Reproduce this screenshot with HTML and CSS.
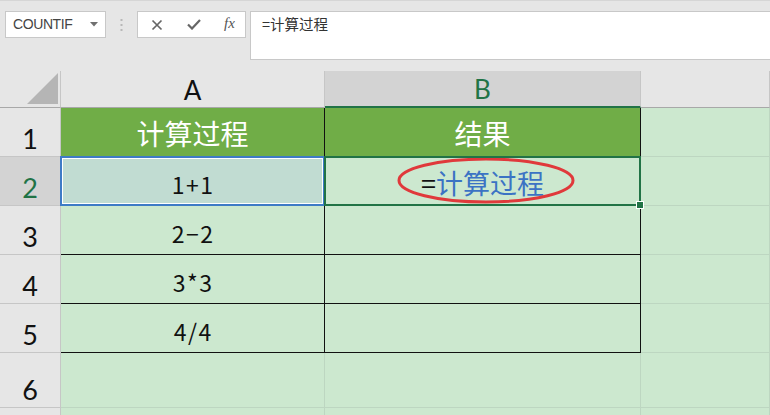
FILE: index.html
```html
<!DOCTYPE html>
<html lang="zh-CN">
<head>
<meta charset="utf-8">
<title>COUNTIF</title>
<link rel="stylesheet" href="styles.css">
</head>
<body>
<div class="app">
  <div class="toolbar">
    <div class="namebox">
      <span class="name">COUNTIF</span>
      <svg class="caret" width="8" height="5" viewBox="0 0 8 5"><polygon points="0,0 8,0 4,4.5" fill="#707070"/></svg>
    </div>
    <div class="grip">
      <svg width="3" height="12" viewBox="0 0 3 12"><rect x="0.5" y="0" width="2" height="2" fill="#b8b8b8"/><rect x="0.5" y="5" width="2" height="2" fill="#b8b8b8"/><rect x="0.5" y="10" width="2" height="2" fill="#b8b8b8"/></svg>
    </div>
    <div class="btns">
      <span class="btn"><svg width="12" height="12" viewBox="0 0 12 12"><path d="M1.5 1.5 L10.5 10.5 M10.5 1.5 L1.5 10.5" stroke="#666" stroke-width="1.7" fill="none"/></svg></span>
      <span class="btn"><svg width="14" height="11" viewBox="0 0 14 11"><path d="M1 5.5 L5 9.5 L13 1" stroke="#666" stroke-width="2.2" fill="none"/></svg></span>
      <span class="btn fx">fx</span>
    </div>
    <div class="formula">=计算过程</div>
  </div>

  <div class="sheet">
    <div class="corner"><svg width="31" height="31" viewBox="0 0 31 31"><polygon points="31,0 31,31 0,31" fill="#b5b5b5"/></svg></div>
    <div class="ch">A</div>
    <div class="ch sel">B</div>
    <div class="ch rest"></div>

    <div class="rh">1</div>
    <div class="cell head tbl">计算过程</div>
    <div class="cell head tbl">结果</div>
    <div class="cell"></div>

    <div class="rh sel">2</div>
    <div class="cell data tbl ref">1+1</div>
    <div class="cell data tbl active">
      <span class="eq">=</span><span class="refText">计算过程</span>
      <svg class="ring" width="180" height="48" viewBox="0 0 180 48"><ellipse cx="89" cy="23.5" rx="87" ry="21.5" fill="none" stroke="#e0393b" stroke-width="3"/></svg>
    </div>
    <div class="cell"></div>

    <div class="rh">3</div>
    <div class="cell data tbl">2−2</div>
    <div class="cell data tbl"></div>
    <div class="cell"></div>

    <div class="rh">4</div>
    <div class="cell data tbl">3*3</div>
    <div class="cell data tbl"></div>
    <div class="cell"></div>

    <div class="rh">5</div>
    <div class="cell data tbl">4/4</div>
    <div class="cell data tbl"></div>
    <div class="cell"></div>

    <div class="rh">6</div>
    <div class="cell"></div>
    <div class="cell"></div>
    <div class="cell"></div>

    <div class="rh"></div>
    <div class="cell"></div>
    <div class="cell"></div>
    <div class="cell"></div>
  </div>
</div>
</body>
</html>
```

FILE: styles.css
```css
* { box-sizing: border-box; }
html, body { margin: 0; padding: 0; }
body {
  width: 770px;
  height: 415px;
  overflow: hidden;
  background: #e6e6e6;
  font-family: "Noto Sans CJK SC", "Noto Sans", sans-serif;
}
.app { width: 770px; height: 415px; display: flex; flex-direction: column; }

/* formula bar */
.toolbar {
  height: 71px;
  flex: none;
  display: flex;
  align-items: flex-start;
  padding: 10px 0 0 5px;
  border-top: 1px solid #d6d6d6;
  background: #e6e6e6;
}
.namebox {
  width: 101px;
  height: 27px;
  background: #fff;
  border: 1px solid #c8c8c8;
  display: flex;
  align-items: center;
  justify-content: space-between;
  padding: 0 7px 1px 7px;
}
.name {
  font-family: "Liberation Sans", Arial, sans-serif;
  font-size: 14px;
  letter-spacing: -0.4px;
  color: #444;
}
.caret { margin-top: 1px; }
.grip {
  width: 31px;
  height: 27px;
  display: flex;
  align-items: center;
  justify-content: center;
}
.btns {
  width: 109px;
  height: 27px;
  background: #fff;
  border: 1px solid #c8c8c8;
  display: grid;
  grid-template-columns: 37px 37px 35px;
  align-items: center;
  justify-items: center;
}
.btn { display: flex; align-items: center; justify-content: center; }
.fx {
  font-family: "Liberation Serif", "Times New Roman", serif;
  font-style: italic;
  font-size: 15px;
  color: #555;
  padding-bottom: 2px;
}
.formula {
  flex: 1;
  height: 49px;
  margin-left: 4px;
  background: #fff;
  border: 1px solid #c8c8c8;
  border-right: none;
  padding: 2px 0 0 11px;
  font-size: 14.5px;
  color: #333;
  line-height: 20px;
}

/* sheet grid */
.sheet {
  flex: 1;
  overflow: hidden;
  display: grid;
  grid-template-columns: 61px 264px 316px 1fr;
  grid-template-rows: 37px 49px 49px 49px 49px 49px 55px 49px;
}
.corner {
  background: #e6e6e6;
  border-right: 1px solid #c6c6c6;
  border-bottom: 1px solid #a8a8a8;
  display: flex;
  align-items: flex-end;
  justify-content: flex-end;
  padding: 0 2px 3px 0;
}
.ch {
  background: #e6e6e6;
  border-right: 1px solid #c6c6c6;
  border-bottom: 1px solid #a8a8a8;
  display: flex;
  align-items: center;
  justify-content: center;
  font-family: Lato, "Open Sans", sans-serif;
  font-size: 26px;
  color: #111;
  padding-top: 1px;
}
.ch.sel {
  background: #d3d3d3;
  color: #217346;
  border-bottom: 2px solid #217346;
}
.rh {
  background: #e6e6e6;
  border-right: 1px solid #c6c6c6;
  border-bottom: 1px solid #c6c6c6;
  display: flex;
  align-items: flex-end;
  justify-content: center;
  font-family: Lato, "Open Sans", sans-serif;
  font-size: 27px;
  line-height: 1;
  color: #111;
  padding-bottom: 4px;
}
.rh.sel {
  background: #d3d3d3;
  color: #217346;
}

.cell {
  position: relative;
  background: #cce8cf;
  border-right: 1px solid #bdd6c1;
  border-bottom: 1px solid #bdd6c1;
  display: flex;
  align-items: center;
  justify-content: center;
}
.cell.tbl { border-right-color: #111; border-bottom-color: #111; }
.head {
  background: #70ad47;
  color: #fff;
  font-size: 28px;
  padding-top: 2px;
}
.data {
  font-size: 23px;
  letter-spacing: 1.5px;
  text-indent: 1.5px;
  color: #111;
  padding-top: 5px;
}
.ref { background: #c1dcd2; }
.ref::after {
  content: "";
  position: absolute;
  top: -1px;
  left: -1px;
  right: -1px;
  bottom: -1px;
  border: 2px solid #3e7bc6;
  box-shadow: inset 0 0 0 1px #fff;
}
.active { z-index: 2; padding-top: 2px; font-size: 27px; letter-spacing: 0; text-indent: 0; }
.active::after {
  content: "";
  position: absolute;
  top: -1px;
  left: -1px;
  right: -1px;
  bottom: -1px;
  border: 2px solid #217346;
}
.active::before {
  content: "";
  position: absolute;
  right: -4px;
  bottom: -4px;
  width: 6px;
  height: 6px;
  background: #217346;
  border: 1px solid #fff;
  z-index: 3;
}
.eq { color: #111; }
.refText { color: #3b73c4; }
.ring {
  position: absolute;
  left: 72px;
  top: 0px;
}
```
